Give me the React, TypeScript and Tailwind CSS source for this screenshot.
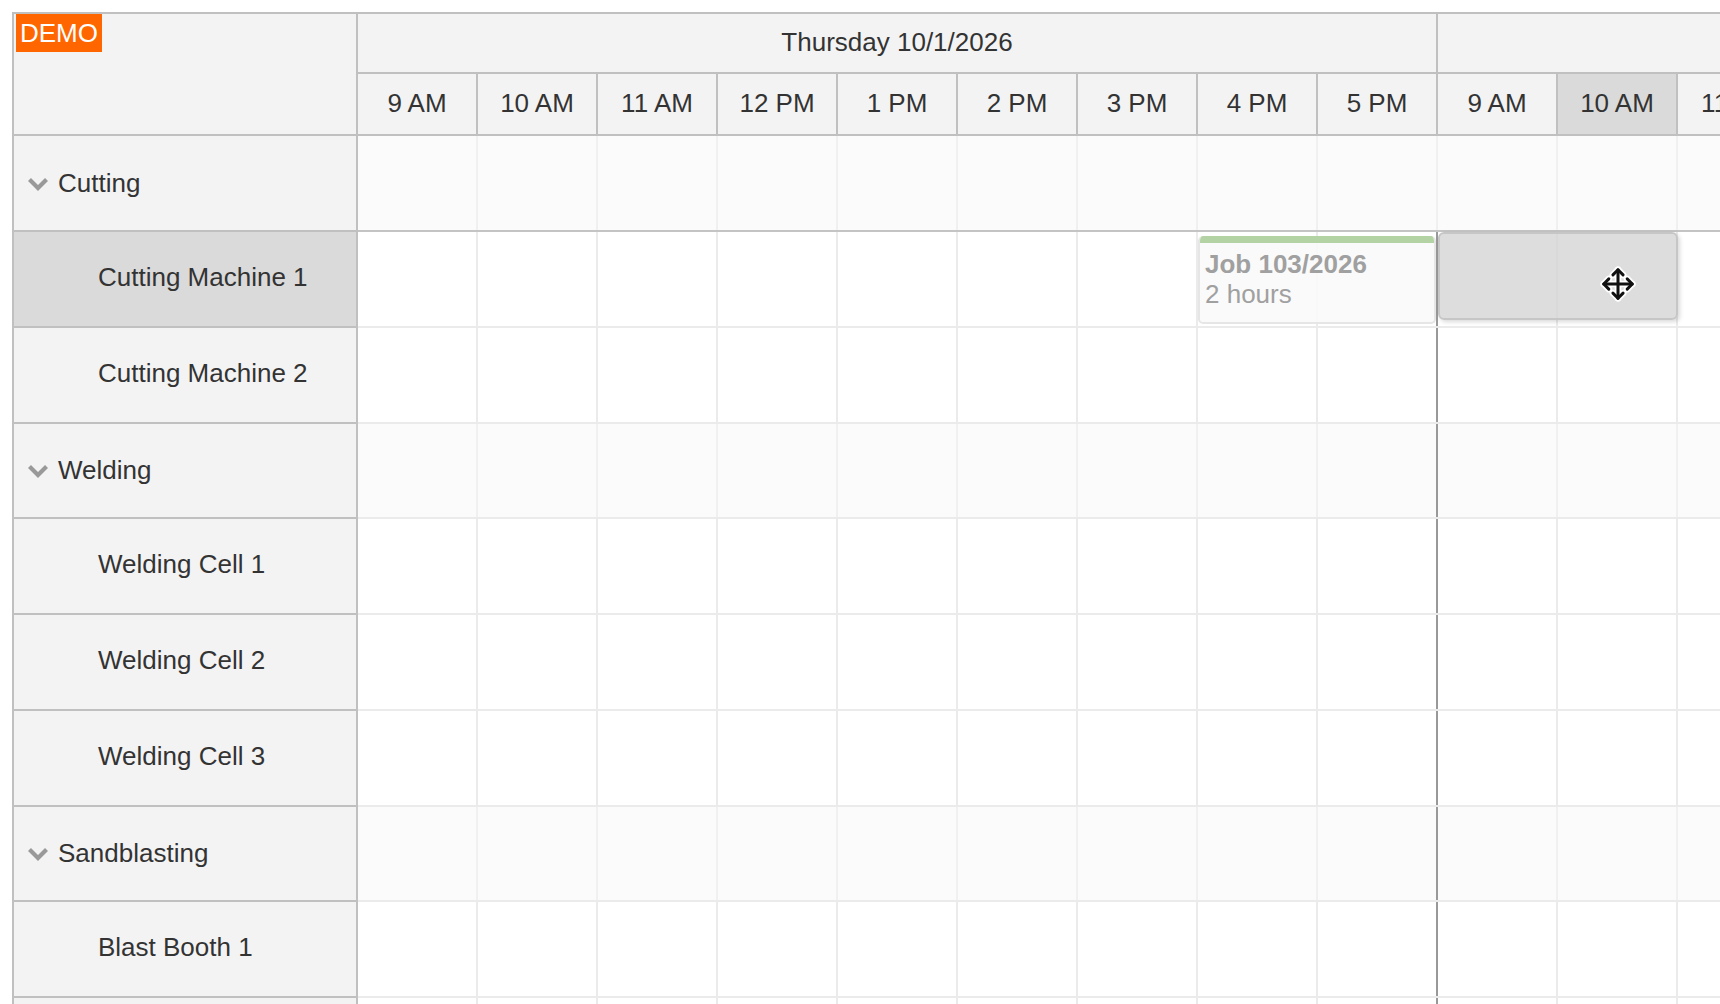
import { useMemo } from "react";

type Resource = {
  name: string;
  group?: boolean;
  hover?: boolean;
};

const resources: Resource[] = [
  { name: "Cutting", group: true },
  { name: "Cutting Machine 1", hover: true },
  { name: "Cutting Machine 2" },
  { name: "Welding", group: true },
  { name: "Welding Cell 1" },
  { name: "Welding Cell 2" },
  { name: "Welding Cell 3" },
  { name: "Sandblasting", group: true },
  { name: "Blast Booth 1" },
  { name: "Blast Booth 2" },
];

const hours = ["9 AM", "10 AM", "11 AM", "12 PM", "1 PM", "2 PM", "3 PM", "4 PM", "5 PM"];

const days = [
  { label: "Thursday 10/1/2026", hours },
  { label: "Friday 10/2/2026", hours },
];

const Chevron = () => (
  <svg width="22" height="14" viewBox="0 0 22 14" className="shrink-0">
    <path d="M2.5 2.5 L11 11 L19.5 2.5" fill="none" stroke="#999999" strokeWidth="4.2" />
  </svg>
);

const MoveCursor = () => (
  <svg width="38" height="38" viewBox="0 0 24 24">
    <g fill="none" strokeLinecap="round" strokeLinejoin="round">
      <g stroke="#ffffff" strokeWidth="4.2">
        <path d="M12 3 V21 M3 12 H21" />
        <path d="M8.8 6.2 L12 3 L15.2 6.2 M8.8 17.8 L12 21 L15.2 17.8 M6.2 8.8 L3 12 L6.2 15.2 M17.8 8.8 L21 12 L17.8 15.2" />
      </g>
      <g stroke="#111111" strokeWidth="1.9">
        <path d="M12 3 V21 M3 12 H21" />
        <path d="M8.8 6.2 L12 3 L15.2 6.2 M8.8 17.8 L12 21 L15.2 17.8 M6.2 8.8 L3 12 L6.2 15.2 M17.8 8.8 L21 12 L17.8 15.2" />
      </g>
    </g>
  </svg>
);

const RowHeader = ({ resource, first }: { resource: Resource; first: boolean }) => (
  <div
    className={`flex items-center border-b-2 border-[#c0c0c0] ${
      resource.group ? "pt-[1px]" : "pb-[3px]"
    } ${first ? "h-[96px]" : "h-[95.75px]"} ${resource.hover ? "bg-[#dadada]" : "bg-[#f3f3f3]"}`}
  >
    {resource.group ? (
      <div className="flex items-center gap-[9px] pl-[13px]">
        <Chevron />
        <span>{resource.name}</span>
      </div>
    ) : (
      <span className="pl-[84px]">{resource.name}</span>
    )}
  </div>
);

const Scheduler = () => {
  const columns = useMemo(
    () =>
      days.flatMap((day, d) =>
        day.hours.map((h, i) => ({ id: `${d}-${i}`, label: h, dayEnd: i === day.hours.length - 1 })),
      ),
    [],
  );

  return (
    <div className="ml-[12px] mt-[12px] flex w-max border-2 border-[#c0c0c0] text-[26px] text-[#333333]">
      {/* resource column */}
      <div className="w-[344px] shrink-0 border-r-2 border-[#c0c0c0] bg-[#f3f3f3]">
        <div className="h-[122px] border-b-2 border-[#c0c0c0] pl-[2px]">
          <div className="inline-block h-[38px] bg-[#ff6600] px-[4px] leading-[38px] text-white">DEMO</div>
        </div>
        {resources.map((r, i) => (
          <RowHeader key={r.name} resource={r} first={i === 0} />
        ))}
      </div>

      {/* timeline */}
      <div className="flex flex-col">
        <div className="border-b-2 border-[#c0c0c0] bg-[#f3f3f3]">
          <div className="flex h-[60px] border-b-2 border-[#c0c0c0]">
            {days.map((day, d) => (
              <div
                key={day.label}
                className="flex w-[1080px] items-center justify-center border-r-2 border-[#c0c0c0] pb-[1px]"
              >
                {d === 0 ? day.label : ""}
              </div>
            ))}
          </div>
          <div className="flex h-[60px]">
            {columns.map((c) => (
              <div
                key={c.id}
                className={`flex w-[120px] items-center justify-center border-r-2 border-[#c0c0c0] pb-[2px] ${
                  c.id === "1-1" ? "bg-[#dadada]" : ""
                }`}
              >
                {c.label}
              </div>
            ))}
          </div>
        </div>

        <div className="relative">
          {resources.map((r, ri) => (
            <div
              key={r.name}
              className={`flex border-b-2 ${ri === 0 ? "h-[96px] border-[#c4c4c4]" : "h-[95.75px] border-[#ebebeb]"} ${
                r.group ? "bg-[#fbfbfb]" : "bg-white"
              }`}
            >
              {columns.map((c) => (
                <div
                  key={c.id}
                  className={`w-[120px] border-r-2 ${
                    c.dayEnd && ri > 0 ? "border-[#999999]" : r.group ? "border-[#f0f0f0]" : "border-[#ebebeb]"
                  }`}
                />
              ))}
            </div>
          ))}

          {/* job being dragged: original position */}
          <div className="absolute left-[840px] top-[100px] flex h-[88px] w-[238px] flex-col overflow-hidden rounded-[5px] border-x-2 border-b-2 border-[#e6e6e6] bg-[#fafafa]/90">
            <div className="h-[7px] shrink-0 bg-[#b3d3a4]" />
            <div className="pl-[5px] pt-[6px] leading-[30px] text-[#a0a0a0]">
              <div className="font-bold">Job 103/2026</div>
              <div>2 hours</div>
            </div>
          </div>

          {/* drop target shadow */}
          <div className="absolute left-[1080px] top-[96px] h-[88px] w-[240px] rounded-[6px] border-2 border-[#c6c6c6] bg-[#d4d4d4]/80 shadow-[2px_2px_4px_rgba(0,0,0,0.15)]" />

          <div className="absolute left-[1241px] top-[129px]">
            <MoveCursor />
          </div>
        </div>
      </div>
    </div>
  );
};

export default function App() {
  return (
    <div className="h-[1004px] w-[1720px] overflow-hidden bg-white font-['Liberation_Sans',Arial,sans-serif]">
      <Scheduler />
    </div>
  );
}
